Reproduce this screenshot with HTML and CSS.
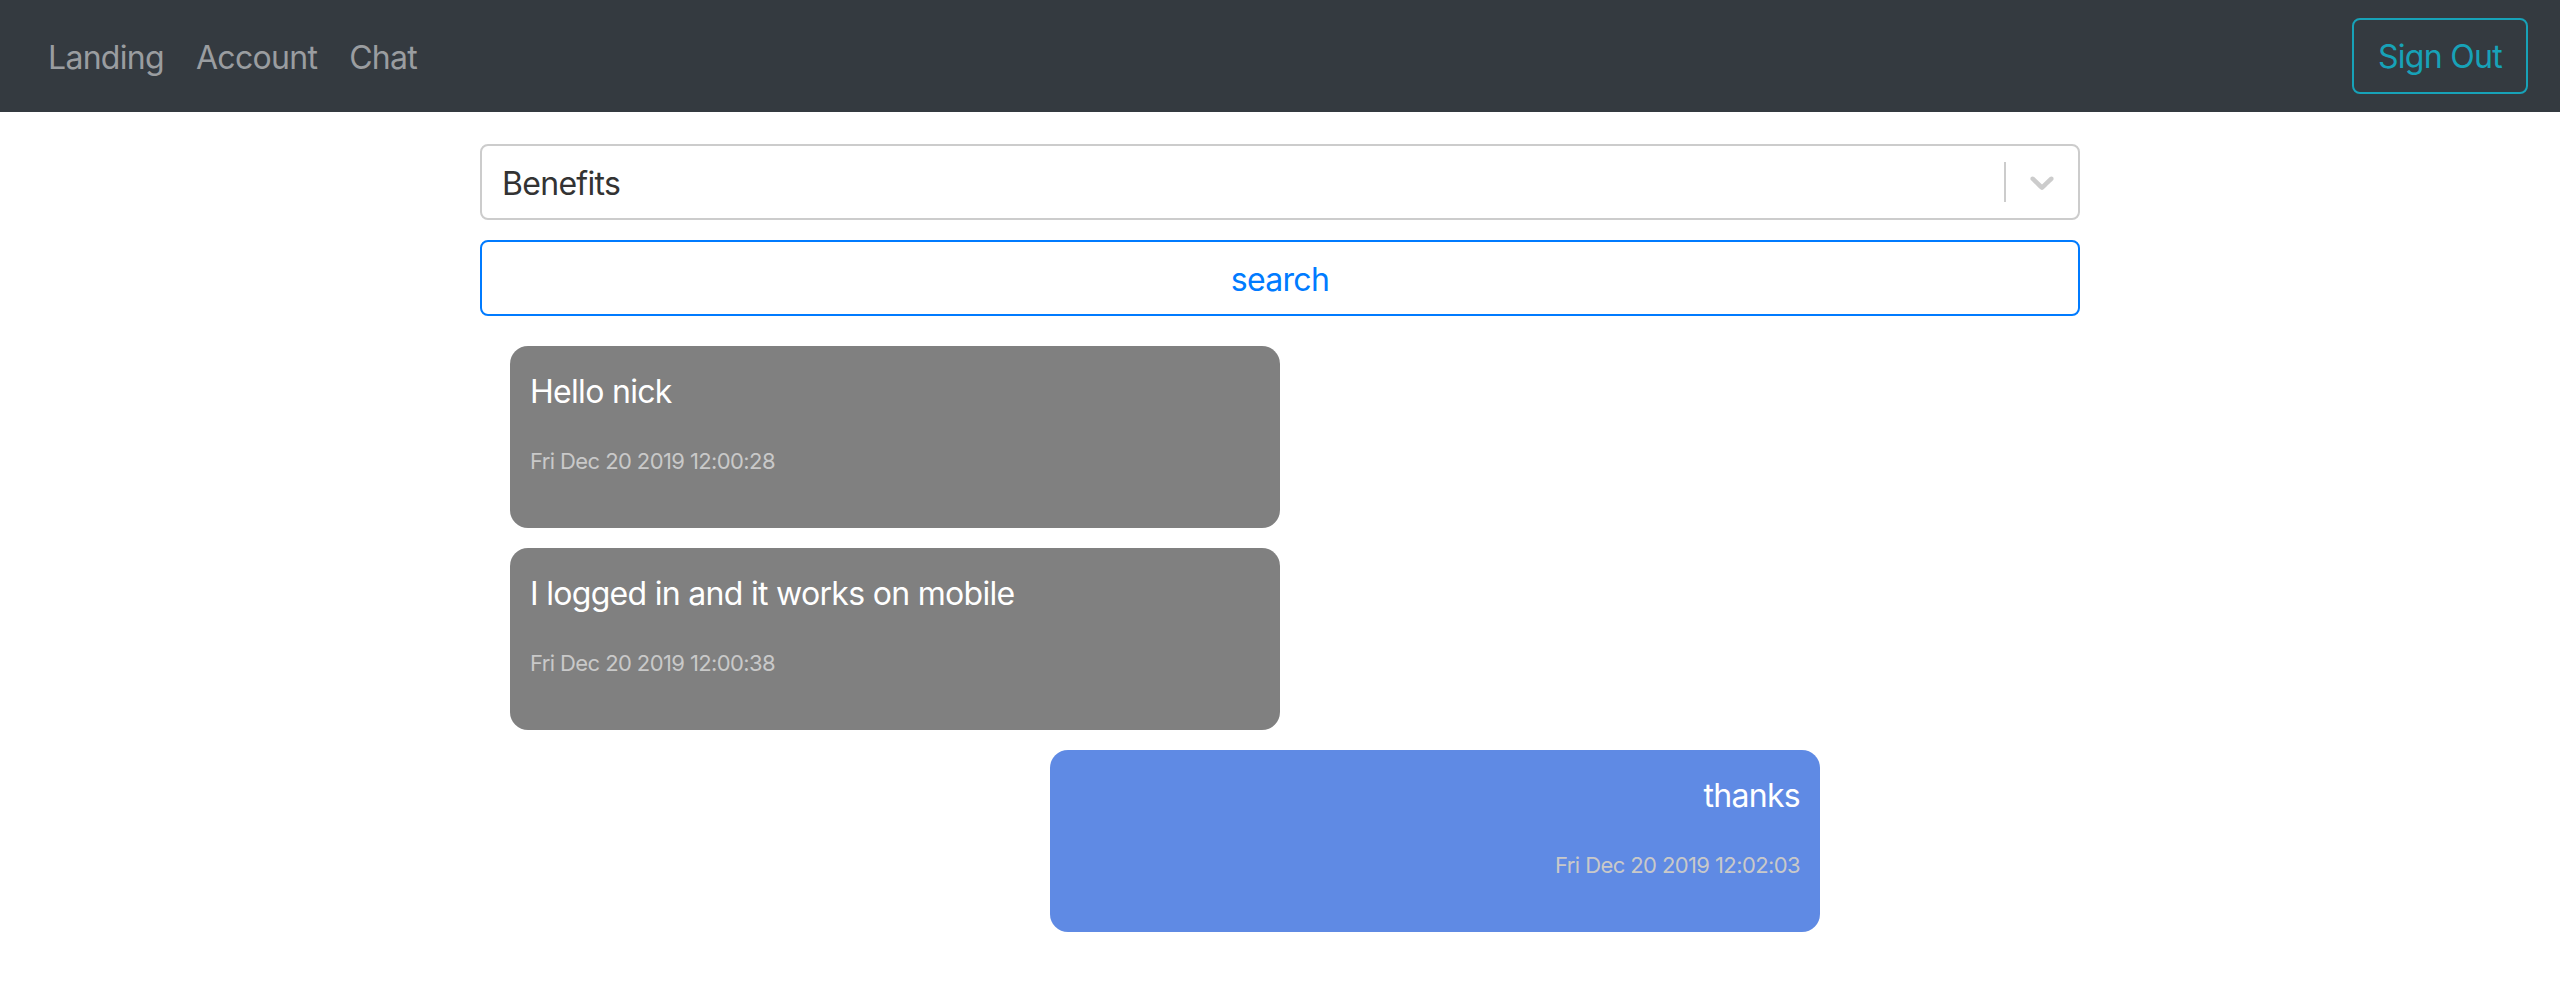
FILE: index.html
```html
<!DOCTYPE html>
<html lang="en">
<head>
<meta charset="utf-8">
<title>Chat</title>
<link rel="stylesheet" href="styles.css">
</head>
<body>
<nav class="navbar">
  <div class="nav-links">
    <a class="nav-link" href="#">Landing</a>
    <a class="nav-link" href="#">Account</a>
    <a class="nav-link" href="#">Chat</a>
  </div>
  <button class="btn-signout">Sign Out</button>
</nav>
<main class="container">
  <div class="select">
    <div class="select-value">Benefits</div>
    <div class="select-indicators">
      <span class="select-sep"></span>
      <span class="select-arrow">
        <svg viewBox="0 0 20 20" width="40" height="40" aria-hidden="true"><path d="M4.516 7.548c0.436-0.446 1.043-0.481 1.576 0l3.908 3.747 3.908-3.747c0.533-0.481 1.141-0.446 1.574 0 0.436 0.445 0.408 1.197 0 1.615-0.406 0.418-4.695 4.502-4.695 4.502-0.217 0.223-0.502 0.335-0.787 0.335s-0.57-0.112-0.789-0.335c0 0-4.287-4.084-4.695-4.502s-0.436-1.170 0-1.615z"></path></svg>
      </span>
    </div>
  </div>
  <button class="btn-search">search</button>
  <section class="messages">
    <div class="bubble incoming">
      <p class="msg-text">Hello nick</p>
      <p class="msg-time">Fri Dec 20 2019 12:00:28</p>
    </div>
    <div class="bubble incoming">
      <p class="msg-text">I logged in and it works on mobile</p>
      <p class="msg-time">Fri Dec 20 2019 12:00:38</p>
    </div>
    <div class="bubble outgoing">
      <p class="msg-text">thanks</p>
      <p class="msg-time">Fri Dec 20 2019 12:02:03</p>
    </div>
  </section>
</main>
</body>
</html>
```
FILE: styles.css
```css
* { box-sizing: border-box; }
html, body { margin: 0; padding: 0; }
body {
  font-family: Inter, "Liberation Sans", sans-serif;
  font-size: 32px;
  line-height: 1.5;
  letter-spacing: -0.7px;
  color: #212529;
  background: #fff;
}
.navbar {
  display: flex;
  align-items: center;
  justify-content: space-between;
  height: 112px;
  padding: 16px 32px;
  background: #343a40;
}
.nav-links { display: flex; }
.nav-link {
  display: block;
  padding: 18px 16px 14px;
  color: #9a9da0;
  text-decoration: none;
  line-height: 48px;
}
.btn-signout {
  font-family: inherit;
  font-size: 32px;
  letter-spacing: inherit;
  line-height: 48px;
  padding: 13px 24px 11px;
  color: #17a2b8;
  background: transparent;
  border: 2px solid #17a2b8;
  border-radius: 8px;
}
.container {
  width: 1600px;
  margin: 32px auto 0;
  display: flex;
  flex-direction: column;
}
.select {
  display: flex;
  align-items: center;
  height: 76px;
  border: 2px solid #cccccc;
  border-radius: 8px;
  background: #fff;
}
.select-value {
  flex: 1;
  padding: 6px 20px 2px;
  color: #333333;
}
.select-indicators {
  display: flex;
  align-items: center;
  align-self: stretch;
}
.select-sep {
  width: 2px;
  height: 40px;
  background: #cccccc;
}
.select-arrow {
  display: flex;
  padding: 16px;
}
.select-arrow svg { fill: #cccccc; }
.btn-search {
  margin-top: 20px;
  height: 76px;
  padding-top: 4px;
  font-family: inherit;
  font-size: 32px;
  letter-spacing: inherit;
  line-height: 48px;
  color: #007bff;
  background: transparent;
  border: 2px solid #007bff;
  border-radius: 8px;
}
.messages {
  display: flex;
  flex-direction: column;
  gap: 20px;
  margin-top: 30px;
}
.bubble {
  width: 770px;
  padding: 22px 20px 50px;
  border-radius: 18px;
  color: #fff;
}
.incoming {
  align-self: flex-start;
  margin-left: 30px;
  background: #808080;
}
.outgoing {
  align-self: flex-end;
  margin-right: 260px;
  background: #5f8ae4;
  text-align: right;
}
.msg-text {
  margin: 0 0 29px;
  font-size: 32px;
  line-height: 48px;
}
.msg-time {
  margin: 0;
  font-size: 22px;
  line-height: 33px;
  letter-spacing: -0.6px;
  color: #c9c9c9;
}
```
